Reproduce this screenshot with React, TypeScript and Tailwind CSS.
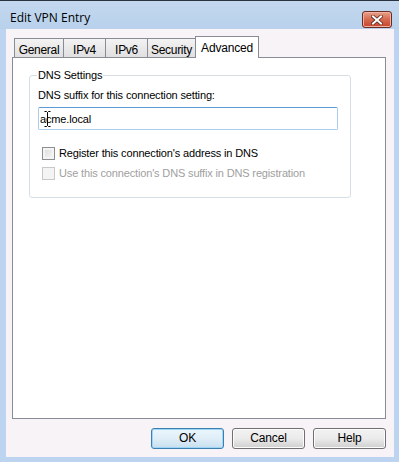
import { useState } from 'react';

const tabs = [
  { label: 'General', w: 'w-[50px]' },
  { label: 'IPv4', w: 'w-[43px]' },
  { label: 'IPv6', w: 'w-[43px]' },
  { label: 'Security', w: 'w-[49px]' },
  { label: 'Advanced', w: 'w-[64px]' },
];

function Tab({ label, w, active }: { label: string; w: string; active: boolean }) {
  if (active) {
    return (
      <div className={`relative z-10 -mb-px flex h-[22px] ${w} items-start justify-center border border-b-0 border-[#898c95] bg-white pt-[2px] text-[12px] tracking-[-0.2px] text-black`}>
        {label}
      </div>
    );
  }
  return (
    <div className={`-mr-px flex h-[19px] ${w} items-start justify-center border border-b-0 border-[#898c95] bg-gradient-to-b from-[#f3f3f3] to-[#e0e0e0] pt-[2px] text-[12px] tracking-[-0.3px]`}>
      {label}
    </div>
  );
}

function Button({ label, primary }: { label: string; primary?: boolean }) {
  return (
    <button
      className={`h-[21px] w-[73px] rounded-[3px] border text-center text-[12px] leading-[19px] ${
        primary
          ? 'border-[#3c7fb1] bg-gradient-to-b from-[#eaf6fd] via-[#e0eef8] to-[#c8dfee] shadow-[inset_0_0_0_1px_#9fd6f5]'
          : 'border-[#707070] bg-gradient-to-b from-[#f2f2f2] via-[#ebebeb] to-[#cfcfcf] shadow-[inset_0_0_0_1px_#fcfcfc]'
      }`}
    >
      {label}
    </button>
  );
}

function Checkbox({ label, disabled }: { label: string; disabled?: boolean }) {
  return (
    <div className={`flex items-center gap-[4px] ${disabled ? 'text-[#a0a0a0]' : 'text-black'}`}>
      <span
        className={`h-[13px] w-[13px] border ${
          disabled
            ? 'border-[#c8c8c8] bg-[#f4f4f4]'
            : 'border-[#8e8f8f] bg-gradient-to-br from-[#dcdcdc] to-[#f7f7f7] shadow-[inset_0_0_0_2px_#f4f4f4]'
        }`}
      />
      <span>{label}</span>
    </div>
  );
}

export default function App() {
  const [suffix, setSuffix] = useState('acme.local');
  const active = 'Advanced';

  return (
    <div
      className="flex h-[462px] w-[399px] flex-col bg-[#bcd4ef] text-[11px] tracking-[-0.15px] text-black"
      style={{ fontFamily: '"Liberation Sans", Arial, sans-serif' }}
    >
      {/* title bar */}
      <div className="flex h-[29px] items-start justify-between border-t border-[#2a3440] bg-gradient-to-b from-[#c3d8ef] to-[#b9d1ec] pl-[10px] pr-[7px]">
        <span className="mt-[9px] text-[12px] leading-[15px] tracking-normal text-black" style={{ fontFamily: '"Open Sans", "Liberation Sans", sans-serif' }}>
          Edit VPN Entry
        </span>
        <div className="mt-[10px] flex h-[17px] w-[30px] items-center justify-center rounded-[3px] border border-[#6b2a22] bg-gradient-to-b from-[#e8a08b] via-[#d5694f] to-[#c8432b] shadow-[inset_0_0_0_1px_#eeb3a3]">
          <svg width="12" height="10" viewBox="0 0 12 10">
            <path d="M2 1.5 L10 8.5 M10 1.5 L2 8.5" stroke="#5a2a22" strokeWidth="3.6" strokeLinecap="square" />
            <path d="M2 1.5 L10 8.5 M10 1.5 L2 8.5" stroke="#ffffff" strokeWidth="2" strokeLinecap="square" />
          </svg>
        </div>
      </div>

      {/* client area */}
      <div className="mb-[5px] ml-[6px] mr-[5px] flex flex-1 flex-col bg-[#f7f3f7] pl-[6px] pr-[8px] pt-[7px]">
        <div className="flex items-end pl-[2px]">
          {tabs.map((t) => (
            <Tab key={t.label} label={t.label} w={t.w} active={t.label === active} />
          ))}
        </div>
        <div className="h-[362px] border border-[#898c95] bg-white pl-[16px] pr-[34px] pt-[10px]">
          <fieldset className="rounded-[3px] border border-[#d5dfe5] px-[8px] pb-[17px]">
            <legend className="ml-[-1px] px-[1px] leading-[14px]">DNS Settings</legend>
            <div className="mt-[6px] leading-[14px]">DNS suffix for this connection setting:</div>
            <div className="relative mt-[5px] h-[23px] w-[300px] rounded-[2px] border border-[#a9cbec] border-t-[#5d9ad2] bg-white">
              <input
                value={suffix}
                onChange={(e) => setSuffix(e.target.value)}
                className="h-full w-full bg-transparent px-[1px] text-[11px] tracking-[-0.15px] outline-none"
                style={{ fontFamily: '"Liberation Sans", Arial, sans-serif' }}
              />
              <svg className="absolute left-[5px] top-[3px]" width="7" height="16" viewBox="0 0 7 16">
                <path d="M0.5 0.5 H2.5 L3.5 1.5 L4.5 0.5 H6.5 M3.5 1.5 V14.5 M0.5 15.5 H2.5 L3.5 14.5 L4.5 15.5 H6.5" stroke="#000" strokeWidth="1" fill="none" />
              </svg>
            </div>
            <div className="mt-[17px] flex flex-col gap-[7px] pl-[4px] leading-[13px]">
              <Checkbox label="Register this connection's address in DNS" />
              <Checkbox label="Use this connection's DNS suffix in DNS registration" disabled />
            </div>
          </fieldset>
        </div>
        <div className="mt-[9px] flex justify-end gap-[8px]">
          <Button label="OK" primary />
          <Button label="Cancel" />
          <Button label="Help" />
        </div>
      </div>
    </div>
  );
}
